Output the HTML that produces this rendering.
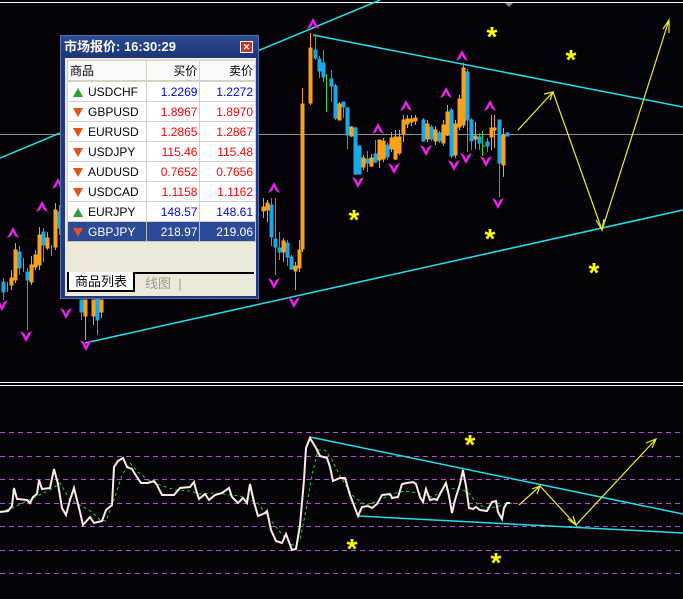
<!DOCTYPE html>
<html><head><meta charset="utf-8"><style>
body{margin:0;width:683px;height:599px;background:#050308;overflow:hidden;position:relative;font-family:"Liberation Sans","Noto Sans CJK SC",sans-serif}
svg{position:absolute;left:0;top:0}
#panel{position:absolute;left:60px;top:35px;width:199px;height:264px;background:#223a7a;box-sizing:border-box;border:1px solid #5470b0}
#title{position:absolute;left:0;top:0;width:197px;height:21px;background:linear-gradient(#2d4c96,#1c3474);color:#fff;font-weight:bold;font-size:13px;line-height:21px;padding-left:3px;box-sizing:border-box}
#close{position:absolute;right:5px;top:5px;width:11px;height:10px;background:#c8302a;border:1px solid #fff;color:#fff;font-size:9px;line-height:10px;text-align:center}
#inner{position:absolute;left:4px;top:22px;width:191px;height:238px;background:#ece9d8}
table{position:absolute;left:2px;top:2px;border-collapse:collapse;font-size:12px;background:#fff}
td{height:19px;border:1px solid #d4d0c8;padding:0 2px;white-space:nowrap}
td.n{width:74px}td.b{width:49px;text-align:right}td.a{width:51px;text-align:right}
tr.h td{background:#fafaf8;border-bottom:2px solid #d4d0c8}
.bl{color:#0000ff}.rd{color:#ff0000}
tr.sel td{background:#2c4a96;color:#fff;border-color:#c0c0c0}
.up,.dn{display:inline-block;width:0;height:0;margin:0 5px 0 3px;vertical-align:middle}
.up{border-left:5px solid transparent;border-right:5px solid transparent;border-bottom:9px solid #2ca02c}
.dn{border-left:5px solid transparent;border-right:5px solid transparent;border-top:9px solid #e8501c}
#tabs{position:absolute;left:2px;top:214px;width:187px;height:21px;border-top:2px solid #000;font-size:13px}
#t1{position:absolute;left:0;top:-2px;width:68px;height:20px;background:#fff;border:2px solid #000;border-top:none;text-align:center;line-height:20px;box-sizing:border-box}
#t2{position:absolute;left:78px;top:0;color:#999;line-height:19px}
</style></head><body>
<svg width="683" height="599" viewBox="0 0 683 599">
<defs>
<path id="u" d="M0,-6 L-6,5 L-2,3 L0,-1 L2,3 L6,5 Z"/>
<path id="d" d="M0,6 L-6,-5 L-2,-3 L0,1 L2,-3 L6,-5 Z"/>
</defs>
<line x1="0" y1="2.5" x2="683" y2="2.5" stroke="#fff"/>
<polygon points="505,3 513,3 509,7" fill="#888"/>
<line x1="0" y1="134.5" x2="683" y2="134.5" stroke="#909090"/>
<g stroke="#20e0e8" stroke-width="1.5" fill="none">
<line x1="0" y1="158" x2="380" y2="0"/>
<line x1="313" y1="35" x2="683" y2="107"/>
<line x1="85" y1="343" x2="683" y2="210"/>
</g>
<g stroke="#1aa8e8" fill="#1aa8e8">
<line x1="3.5" y1="278" x2="3.5" y2="300"/><rect x="2" y="282" width="3" height="10"/>
<line x1="19.5" y1="246" x2="19.5" y2="275"/><rect x="18" y="252" width="3" height="16"/>
<line x1="27.5" y1="268" x2="27.5" y2="330"/><rect x="26" y="272" width="3" height="8"/>
<line x1="43.5" y1="228" x2="43.5" y2="262"/><rect x="42" y="232" width="3" height="13"/>
<line x1="59.5" y1="205" x2="59.5" y2="235"/><rect x="58" y="212" width="3" height="16"/>
<line x1="81.5" y1="300" x2="81.5" y2="320"/><rect x="80" y="300" width="3" height="12"/>
<line x1="97.5" y1="298" x2="97.5" y2="335"/><rect x="96" y="298" width="3" height="22"/>
<line x1="271.5" y1="198" x2="271.5" y2="246"/><rect x="270" y="205" width="3" height="32"/>
<line x1="275.5" y1="198" x2="275.5" y2="275"/><rect x="274" y="239" width="3" height="8"/>
<line x1="279.5" y1="232" x2="279.5" y2="260"/><rect x="278" y="248" width="3" height="4"/>
<line x1="287.5" y1="240" x2="287.5" y2="266"/><rect x="286" y="243" width="3" height="14"/>
<line x1="291.5" y1="255" x2="291.5" y2="270"/><rect x="290" y="257" width="3" height="12"/>
<line x1="315.5" y1="34" x2="315.5" y2="60"/><rect x="314" y="50" width="3" height="8"/>
<line x1="319.5" y1="56" x2="319.5" y2="78"/><rect x="318" y="59" width="3" height="12"/>
<line x1="323.5" y1="50" x2="323.5" y2="82"/><rect x="322" y="63" width="3" height="14"/>
<line x1="331.5" y1="70" x2="331.5" y2="102"/><rect x="330" y="79" width="3" height="7"/>
<line x1="335.5" y1="84" x2="335.5" y2="120"/><rect x="334" y="86" width="3" height="32"/>
<line x1="343.5" y1="102" x2="343.5" y2="118"/><rect x="342" y="102" width="3" height="5"/>
<line x1="347.5" y1="107" x2="347.5" y2="149"/><rect x="346" y="108" width="3" height="27"/>
<line x1="355.5" y1="127" x2="355.5" y2="175"/><rect x="354" y="128" width="3" height="46"/>
<line x1="359.5" y1="146" x2="359.5" y2="174"/><rect x="358" y="146" width="3" height="28"/>
<line x1="367.5" y1="151" x2="367.5" y2="172"/><rect x="366" y="159" width="3" height="4"/>
<line x1="375.5" y1="140" x2="375.5" y2="163"/><rect x="374" y="154" width="3" height="8"/>
<line x1="387.5" y1="143" x2="387.5" y2="160"/><rect x="386" y="145" width="3" height="12"/>
<line x1="423.5" y1="118" x2="423.5" y2="142"/><rect x="422" y="120" width="3" height="21"/>
<line x1="431.5" y1="125" x2="431.5" y2="141"/><rect x="430" y="127" width="3" height="12"/>
<line x1="439.5" y1="131" x2="439.5" y2="143"/><rect x="438" y="133" width="3" height="8"/>
<line x1="451.5" y1="108" x2="451.5" y2="158"/><rect x="450" y="110" width="3" height="46"/>
<line x1="467.5" y1="69" x2="467.5" y2="152"/><rect x="466" y="72" width="3" height="48"/>
<line x1="471.5" y1="118" x2="471.5" y2="150"/><rect x="470" y="120" width="3" height="21"/>
<line x1="479.5" y1="133" x2="479.5" y2="150"/><rect x="478" y="137" width="3" height="6"/>
<line x1="487.5" y1="138" x2="487.5" y2="152"/><rect x="486" y="142" width="3" height="4"/>
<line x1="499.5" y1="120" x2="499.5" y2="197"/><rect x="498" y="120" width="3" height="43"/>
<rect x="506" y="133" width="3" height="3"/>
</g>
<g stroke="#f8a21c" fill="#f8a21c">
<line x1="11.5" y1="270" x2="11.5" y2="290"/><rect x="10" y="278" width="3" height="7"/>
<line x1="15.5" y1="243" x2="15.5" y2="283"/><rect x="14" y="250" width="3" height="30"/>
<line x1="31.5" y1="256" x2="31.5" y2="285"/><rect x="30" y="265" width="3" height="17"/>
<line x1="35.5" y1="250" x2="35.5" y2="270"/><rect x="34" y="255" width="3" height="12"/>
<line x1="39.5" y1="227" x2="39.5" y2="270"/><rect x="38" y="235" width="3" height="30"/>
<line x1="47.5" y1="232" x2="47.5" y2="250"/><rect x="46" y="238" width="3" height="10"/>
<line x1="55.5" y1="203" x2="55.5" y2="250"/><rect x="54" y="210" width="3" height="37"/>
<line x1="85.5" y1="300" x2="85.5" y2="340"/><rect x="84" y="300" width="3" height="16"/>
<line x1="93.5" y1="300" x2="93.5" y2="325"/><rect x="92" y="300" width="3" height="16"/>
<line x1="101.5" y1="300" x2="101.5" y2="318"/><rect x="100" y="300" width="3" height="12"/>
<line x1="263.5" y1="198" x2="263.5" y2="218"/><rect x="262" y="207" width="3" height="4"/>
<line x1="267.5" y1="200" x2="267.5" y2="222"/><rect x="266" y="203" width="3" height="7"/>
<line x1="283.5" y1="238" x2="283.5" y2="262"/><rect x="282" y="241" width="3" height="11"/>
<line x1="295.5" y1="262" x2="295.5" y2="290"/><rect x="294" y="266" width="3" height="5"/>
<line x1="299.5" y1="240" x2="299.5" y2="272"/><rect x="298" y="250" width="3" height="18"/>
<line x1="302.5" y1="88" x2="302.5" y2="252"/><rect x="301" y="104" width="3" height="145"/>
<line x1="310.5" y1="33" x2="310.5" y2="105"/><rect x="309" y="48" width="3" height="55"/>
<line x1="339.5" y1="102" x2="339.5" y2="120"/><rect x="338" y="104" width="3" height="16"/>
<line x1="351.5" y1="126" x2="351.5" y2="137"/><rect x="350" y="127" width="3" height="9"/>
<line x1="363.5" y1="155" x2="363.5" y2="170"/><rect x="362" y="158" width="3" height="9"/>
<line x1="371.5" y1="154" x2="371.5" y2="167"/><rect x="370" y="158" width="3" height="8"/>
<line x1="379.5" y1="140" x2="379.5" y2="168"/><rect x="378" y="140" width="3" height="20"/>
<line x1="383.5" y1="138" x2="383.5" y2="162"/><rect x="382" y="141" width="3" height="18"/>
<line x1="391.5" y1="132" x2="391.5" y2="152"/><rect x="390" y="138" width="3" height="11"/>
<line x1="395.5" y1="130" x2="395.5" y2="160"/><rect x="394" y="137" width="3" height="22"/>
<line x1="399.5" y1="130" x2="399.5" y2="155"/><rect x="398" y="137" width="3" height="16"/>
<line x1="403.5" y1="115" x2="403.5" y2="142"/><rect x="402" y="120" width="3" height="14"/>
<line x1="407.5" y1="115" x2="407.5" y2="128"/><rect x="406" y="119" width="3" height="5"/>
<line x1="411.5" y1="115" x2="411.5" y2="126"/><rect x="410" y="119" width="3" height="3"/>
<line x1="415.5" y1="115" x2="415.5" y2="125"/><rect x="414" y="118" width="3" height="3"/>
<line x1="427.5" y1="120" x2="427.5" y2="142"/><rect x="426" y="124" width="3" height="15"/>
<line x1="435.5" y1="126" x2="435.5" y2="145"/><rect x="434" y="130" width="3" height="11"/>
<line x1="443.5" y1="120" x2="443.5" y2="146"/><rect x="442" y="125" width="3" height="18"/>
<line x1="447.5" y1="105" x2="447.5" y2="136"/><rect x="446" y="112" width="3" height="23"/>
<line x1="455.5" y1="120" x2="455.5" y2="158"/><rect x="454" y="124" width="3" height="31"/>
<line x1="459.5" y1="95" x2="459.5" y2="130"/><rect x="458" y="99" width="3" height="28"/>
<line x1="463.5" y1="63" x2="463.5" y2="128"/><rect x="462" y="68" width="3" height="57"/>
<line x1="475.5" y1="122" x2="475.5" y2="149"/><rect x="474" y="136" width="3" height="3"/>
<line x1="491.5" y1="115" x2="491.5" y2="150"/><rect x="490" y="128" width="3" height="9"/>
<line x1="494.5" y1="115" x2="494.5" y2="148"/><rect x="493" y="128" width="3" height="2"/>
<line x1="503.5" y1="128" x2="503.5" y2="177"/><rect x="502" y="135" width="3" height="30"/>
</g>
<g stroke="#20e020">
<line x1="7.5" y1="282" x2="7.5" y2="292"/><line x1="23.5" y1="258" x2="23.5" y2="272"/><line x1="51.5" y1="245" x2="51.5" y2="256"/>
<line x1="326.5" y1="74" x2="326.5" y2="112"/><line x1="482.5" y1="131" x2="482.5" y2="156"/><line x1="482" y1="146" x2="485" y2="146"/>
</g>
<g fill="#f020f0">
<use href="#u" x="313" y="24"/><use href="#u" x="378" y="129"/><use href="#u" x="406" y="106"/><use href="#u" x="446" y="93"/><use href="#u" x="462" y="56"/><use href="#u" x="490" y="106"/><use href="#u" x="274" y="188"/><use href="#u" x="13" y="233"/><use href="#u" x="42" y="207"/><use href="#u" x="58" y="184"/>
<use href="#d" x="358" y="182"/><use href="#d" x="394" y="168"/><use href="#d" x="426" y="150"/><use href="#d" x="454" y="165"/><use href="#d" x="466" y="158"/><use href="#d" x="486" y="161"/><use href="#d" x="498" y="203"/><use href="#d" x="274" y="283"/><use href="#d" x="294" y="302"/><use href="#d" x="2" y="305"/><use href="#d" x="26" y="336"/><use href="#d" x="66" y="313"/><use href="#d" x="86" y="345"/>
</g>
<g stroke="#f0f020" stroke-width="1.2" fill="none">
<polyline points="518,130 553,92 602,230 669,20"/>
<polyline points="544,94 553,92 550,100"/><polyline points="596,220 602,230 604,219"/><polyline points="663,29 669,20 669,33"/>
</g>
<g fill="#ffff00" font-family="Liberation Sans" font-weight="bold" font-size="28" text-anchor="middle">
<text x="492" y="46">*</text><text x="571" y="69">*</text><text x="354" y="229">*</text><text x="490" y="248">*</text><text x="594" y="282">*</text>
<text x="470" y="454">*</text><text x="352" y="558">*</text><text x="496" y="572">*</text>
</g>
<line x1="0" y1="382.5" x2="683" y2="382.5" stroke="#fff"/>
<line x1="0" y1="385.5" x2="683" y2="385.5" stroke="#fff"/>
<g stroke="#b050d8" stroke-dasharray="5,4">
<line x1="0" y1="432.5" x2="683" y2="432.5"/><line x1="0" y1="456.5" x2="683" y2="456.5"/><line x1="0" y1="479.5" x2="683" y2="479.5"/><line x1="0" y1="503.5" x2="683" y2="503.5"/><line x1="0" y1="526.5" x2="683" y2="526.5"/><line x1="0" y1="550.5" x2="683" y2="550.5"/><line x1="0" y1="573.5" x2="683" y2="573.5"/>
</g>
<g stroke="#20e0e8" stroke-width="1.5"><line x1="310" y1="437" x2="683" y2="514"/><line x1="358" y1="516" x2="683" y2="533"/></g>
<polyline fill="none" stroke="#10e010" stroke-dasharray="3,3" points="0,512 12,508 25,502 35,497 50,490 60,483 70,500 80,505 92,512 100,520 106,521 114,500 122,475 130,463 138,472 148,480 160,485 175,490 190,491 200,494 215,493 230,495 240,496 258,503 268,517 280,532 292,545 300,540 306,510 312,475 318,450 325,450 331,458 340,476 352,495 365,505 378,501 392,494 405,491 418,493 432,497 445,490 456,488 468,492 478,505 490,508 505,505 512,503"/>
<polyline fill="none" stroke="#ffeaea" stroke-width="2" points="0,512 8,511 12,506 14,488 17,499 27,500 30,503 33,497 37,494 39,480 42,489 50,488 54,469 58,484 62,508 66,515 70,500 74,488 80,512 83,525 90,517 94,523 102,521 106,510 112,505 114,467 118,461 123,458 127,467 132,469 135,474 141,483 148,483 154,481 157,485 162,495 174,495 180,488 190,487 194,482 196,490 199,499 205,494 209,500 215,495 222,493 229,488 232,497 238,503 243,498 247,503 250,484 254,502 258,516 265,513 267,511 271,530 276,541 282,543 286,534 292,550 296,549 300,525 304,480 306,448 310,438 316,448 320,456 327,458 330,467 333,481 340,478 345,478 350,495 358,516 362,507 368,506 372,508 377,504 382,495 390,494 392,498 398,497 402,484 407,483 413,482 416,484 420,497 423,502 426,489 430,500 434,499 437,500 441,492 446,483 449,496 452,513 455,500 460,484 463,470 466,486 469,508 473,509 476,507 480,510 487,511 492,502 496,501 498,512 502,519 504,508 507,503 510,503"/>
<g stroke="#f0f020" stroke-width="1.2" fill="none">
<polyline points="519,505 540,486 576,525 656,439"/>
<polyline points="532,489 540,486 537,494"/><polyline points="568,519 576,525 573,516"/><polyline points="646,443 656,439 652,448"/>
</g>
</svg>
<div id="panel">
<div id="title">市场报价: 16:30:29<div id="close">✕</div></div>
<div id="inner">
<table>
<tr class="h"><td class="n">商品</td><td class="b">买价</td><td class="a">卖价</td></tr>
<tr><td class="n"><span class="up"></span>USDCHF</td><td class="b bl">1.2269</td><td class="a bl">1.2272</td></tr>
<tr><td class="n"><span class="dn"></span>GBPUSD</td><td class="b rd">1.8967</td><td class="a rd">1.8970</td></tr>
<tr><td class="n"><span class="dn"></span>EURUSD</td><td class="b rd">1.2865</td><td class="a rd">1.2867</td></tr>
<tr><td class="n"><span class="dn"></span>USDJPY</td><td class="b rd">115.46</td><td class="a rd">115.48</td></tr>
<tr><td class="n"><span class="dn"></span>AUDUSD</td><td class="b rd">0.7652</td><td class="a rd">0.7656</td></tr>
<tr><td class="n"><span class="dn"></span>USDCAD</td><td class="b rd">1.1158</td><td class="a rd">1.1162</td></tr>
<tr><td class="n"><span class="up"></span>EURJPY</td><td class="b bl">148.57</td><td class="a bl">148.61</td></tr>
<tr class="sel"><td class="n"><span class="dn"></span>GBPJPY</td><td class="b">218.97</td><td class="a">219.06</td></tr>
</table>
<div id="tabs"><div id="t1">商品列表</div><div id="t2">线图 &nbsp;|</div></div>
</div>
</div>
</body></html>
